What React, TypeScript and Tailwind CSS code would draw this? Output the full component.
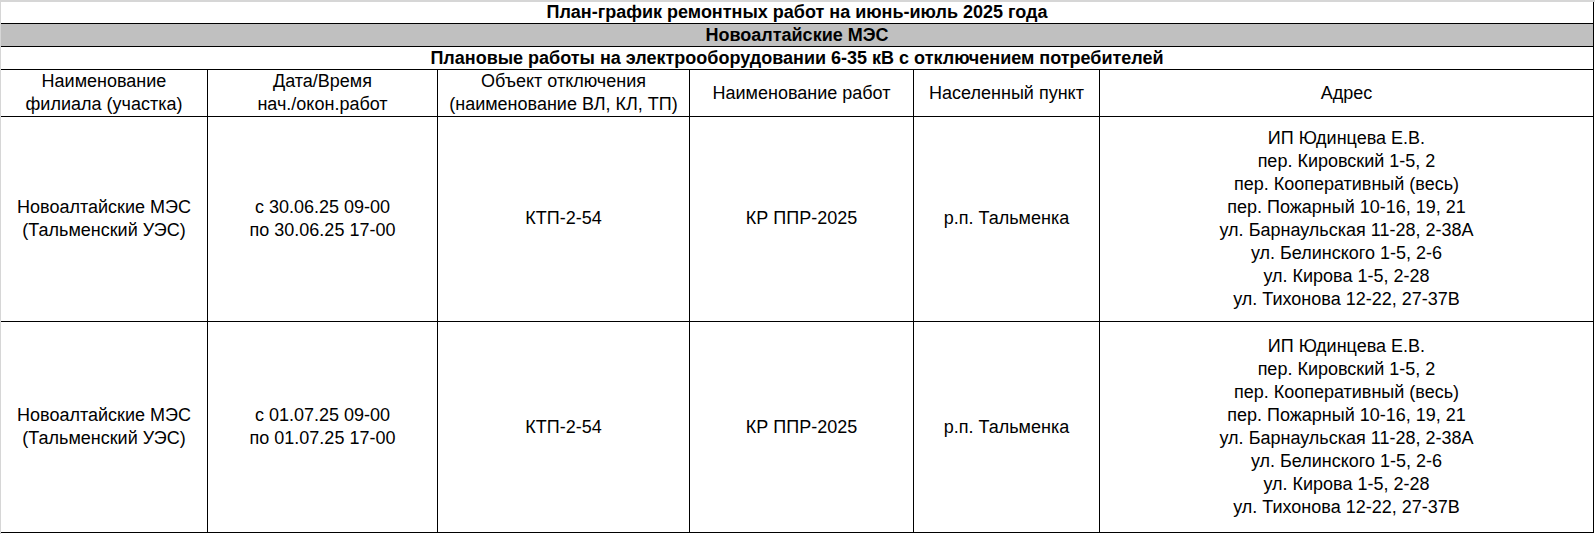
const cols = "grid grid-cols-[207px_230px_252px_224px_186px_494px]";
const cell = "flex items-center justify-center text-center border-r border-b border-black";

const headers = [
  ["Наименование", "филиала (участка)"],
  ["Дата/Время", "нач./окон.работ"],
  ["Объект отключения", "(наименование ВЛ, КЛ, ТП)"],
  ["Наименование работ"],
  ["Населенный пункт"],
  ["Адрес"],
];

const addresses = [
  "ИП Юдинцева Е.В.",
  "пер. Кировский 1-5, 2",
  "пер. Кооперативный (весь)",
  "пер. Пожарный 10-16, 19, 21",
  "ул. Барнаульская 11-28, 2-38А",
  "ул. Белинского 1-5, 2-6",
  "ул. Кирова 1-5, 2-28",
  "ул. Тихонова 12-22, 27-37В",
];

const rows = [
  { from: "с 30.06.25 09-00", to: "по 30.06.25 17-00", h: "h-[206px]" },
  { from: "с 01.07.25 09-00", to: "по 01.07.25 17-00", h: "h-[211px]" },
];

function Lines({ lines }: { lines: string[] }) {
  return (
    <div>
      {lines.map((l, i) => (
        <div key={i}>{l}</div>
      ))}
    </div>
  );
}

export default function App() {
  return (
    <div className="w-[1595px] h-[534px] bg-white border-t-2 border-l border-[#d6d6d6] text-black text-[18px] leading-[23px] font-['Liberation_Sans',Arial,sans-serif]">
      <div className="w-[1593px]">
        <div className="h-[22px] border-r border-b border-black flex items-center justify-center font-bold">
          План-график ремонтных работ на июнь-июль 2025 года
        </div>
        <div className="h-[23px] border-r border-b border-black bg-[#c0c0c0] flex items-center justify-center font-bold">
          Новоалтайские МЭС
        </div>
        <div className="h-[23px] border-r border-b border-black flex items-center justify-center font-bold">
          Плановые работы на электрооборудовании 6-35 кВ с отключением потребителей
        </div>
        <div className={`${cols} h-[46px]`}>
          {headers.map((h, i) => (
            <div key={i} className={cell}>
              <Lines lines={h} />
            </div>
          ))}
        </div>
        {rows.map((r, i) => (
          <div key={i} className={`${cols} ${r.h}`}>
            <div className={cell}>
              <Lines lines={["Новоалтайские МЭС", "(Тальменский УЭС)"]} />
            </div>
            <div className={cell}>
              <Lines lines={[r.from, r.to]} />
            </div>
            <div className={cell}>КТП-2-54</div>
            <div className={cell}>КР ППР-2025</div>
            <div className={cell}>р.п. Тальменка</div>
            <div className={cell}>
              <Lines lines={addresses} />
            </div>
          </div>
        ))}
      </div>
    </div>
  );
}
